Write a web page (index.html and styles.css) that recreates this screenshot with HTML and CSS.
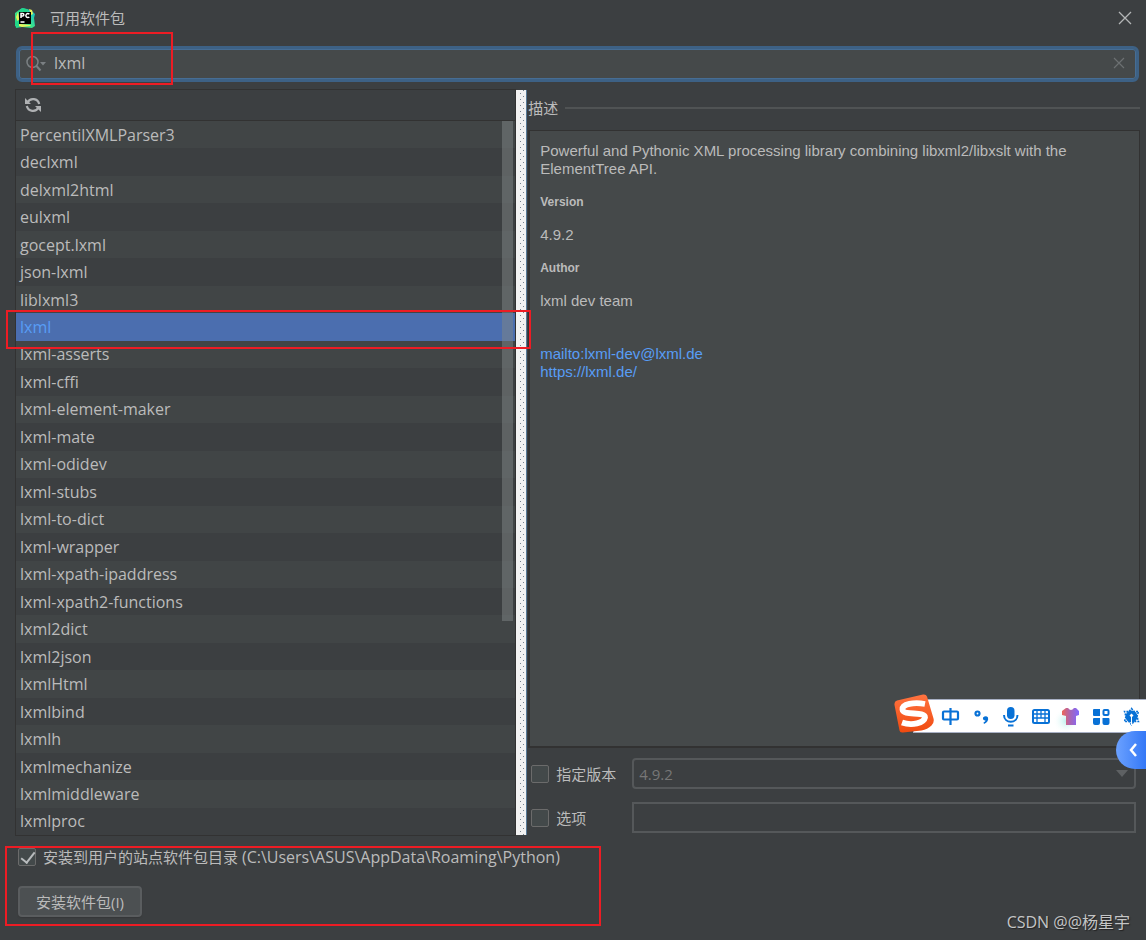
FILE: index.html
```
<!DOCTYPE html>
<html lang="zh-CN">
<head>
<meta charset="utf-8">
<title>可用软件包</title>
<link rel="stylesheet" href="styles.css">
</head>
<body>
<div class="dialog">
  <header class="titlebar">
    <svg class="app-icon" viewBox="0 0 20 20" aria-hidden="true">
      <defs><linearGradient id="pc" x1="0" y1="1" x2="1" y2="0"><stop offset="0" stop-color="#21d789"/><stop offset=".45" stop-color="#3be28a"/><stop offset="1" stop-color="#0fb5d6"/></linearGradient></defs>
      <path fill="url(#pc)" d="M0 5 7 0l5 1 5 2 3 3-1 4 1 8-3 2-10-1-6 1-1-6z"/>
      <path fill="#e9f25a" d="m1 9 2-5 2 12 10 1 1 1-9 1-3-1zM14 1l3 1 1 4-2 1z"/>
      <path fill="#21d789" d="m0 14 4-2v7l-4-1zM3 3l5-3 6 2-2 2H4z"/>
      <path d="M4 4h12v12H4z"/>
      <path fill="none" stroke="#fff" stroke-width="1.500" d="M6 10V5.500h1.600a1.200 1.200 0 0 1 0 2.500H6M14.300 6.200a2 2 0 1 0 0 2.800M5.500 14h4"/>
    </svg>
    <h1 class="title">可用软件包</h1>
    <button class="icon-button close" aria-label="关闭"><svg width="14" height="14" viewBox="0 0 14 14"><path d="m1 1 12 12M13 1 1 13" fill="none" stroke="#b4b6b7" stroke-width="1.300"/></svg></button>
  </header>

  <div class="search">
    <svg width="22" height="18" viewBox="0 0 22 18" aria-hidden="true"><circle cx="6.500" cy="8" r="5.500" fill="none" stroke="#7b8083" stroke-width="1.500"/><path d="m10.500 12 4 4.500" stroke="#7b8083" stroke-width="2"/><path d="M14 8h6l-3 3.500z" fill="#7b8083"/></svg>
    <input class="search-input" type="text" value="lxml" aria-label="搜索">
    <button class="icon-button" aria-label="清除"><svg width="12" height="12" viewBox="0 0 12 12"><path d="m1 1 10 10M11 1 1 11" fill="none" stroke="#6c7072" stroke-width="1.200"/></svg></button>
    <span class="mark mark-search"></span>
  </div>

  <main class="columns">
    <section class="packages">
      <div class="toolbar">
        <button class="icon-button" aria-label="刷新"><svg width="18" height="18" viewBox="0 0 18 18"><g fill="none" stroke="#afb1b3" stroke-width="2.200"><path d="M3.500 6.500A6.300 6.300 0 0 1 15.200 8"/><path d="M14.500 11.500A6.300 6.300 0 0 1 2.800 10"/></g><path fill="#afb1b3" d="M1 2v6h6zM17 16v-6h-6z"/></svg></button>
      </div>
      <ul class="list">
        <li>PercentilXMLParser3</li><li>declxml</li><li>delxml2html</li><li>eulxml</li><li>gocept.lxml</li><li>json-lxml</li><li>liblxml3</li>
        <li class="selected">lxml<span class="mark mark-row"></span></li>
        <li>lxml-asserts</li><li>lxml-cffi</li><li>lxml-element-maker</li><li>lxml-mate</li><li>lxml-odidev</li><li>lxml-stubs</li><li>lxml-to-dict</li><li>lxml-wrapper</li><li>lxml-xpath-ipaddress</li><li>lxml-xpath2-functions</li><li>lxml2dict</li><li>lxml2json</li><li>lxmlHtml</li><li>lxmlbind</li><li>lxmlh</li><li>lxmlmechanize</li><li>lxmlmiddleware</li><li>lxmlproc</li>
      </ul>
      <span class="scroll-thumb"></span>
    </section>
    <div class="splitter"></div>
    <section class="details">
      <h2 class="group-title">描述</h2>
      <article class="description">
        <p>Powerful and Pythonic XML processing library combining libxml2/libxslt with the ElementTree API.</p>
        <h3>Version</h3>
        <p>4.9.2</p>
        <h3>Author</h3>
        <p>lxml dev team</p>
        <p class="links"><a href="mailto:lxml-dev@lxml.de">mailto:lxml-dev@lxml.de</a><br><a href="https://lxml.de/">https://lxml.de/</a></p>
      </article>
      <div class="options">
        <label class="check"><input type="checkbox">指定版本</label>
        <div class="select-wrap">
          <select class="field version" aria-label="版本"><option>4.9.2</option></select>
          <svg class="arrow" width="12" height="7" viewBox="0 0 12 7" aria-hidden="true"><path d="M0 0h12L6 7z" fill="#5e6163"/></svg>
        </div>
        <label class="check"><input type="checkbox">选项</label>
        <input class="field" type="text" aria-label="选项">
      </div>
    </section>
  </main>

  <footer class="footer">
    <label class="check"><input type="checkbox" checked><span>安装到用户的站点软件包目录 <span class="path">(C:\Users\ASUS\AppData\Roaming\Python)</span></span></label>
    <button class="install">安装软件包(I)</button>
    <span class="mark mark-footer"></span>
  </footer>

  <div class="ime">
    <svg class="ime-logo" viewBox="0 0 40 40" aria-hidden="true"><defs><linearGradient id="sg" x1="0" y1="0" x2="0" y2="1"><stop offset="0" stop-color="#ff7340"/><stop offset="1" stop-color="#f04a10"/></linearGradient></defs><path fill="url(#sg)" d="M3 6.500 29 .500q3-.5 4 2l6.500 22q1 4-2 7-4 4-10 5L9 38.500q-3 .5-3.500-2L.5 11Q0 7.500 3 6.500z"/><path d="M31 10C20 8 8 10 8.500 15.500 9 22 31 17 31 23.500 30 29 18 32 8 28.500" fill="none" stroke="#fff" stroke-width="5.800"/></svg>
    <svg class="ime-icons" viewBox="0 0 206 32" aria-hidden="true">
      <defs><linearGradient id="ts" x1="0" y1="0" x2="1" y2="0"><stop offset="0" stop-color="#ed6557"/><stop offset=".5" stop-color="#a665b8"/><stop offset="1" stop-color="#8069ff"/></linearGradient><radialGradient id="gl"><stop offset="0" stop-color="#bdf1ee"/><stop offset="1" stop-color="#fff" stop-opacity="0"/></radialGradient></defs>
      <g fill="none" stroke="#0871d6" stroke-width="2.200"><rect x="3" y="11.500" width="15" height="8" rx="1"/><path d="M10.500 8v17"/><circle cx="37.500" cy="13.500" r="2"/></g>
      <path fill="#0871d6" d="M43 17.500q3-2.500 5 0 1 4-4 6.500l-.5-1.500q2-1 2-2-3 0-2.500-3z"/>
      <rect x="67" y="7" width="7.500" height="12" rx="3.700" fill="#0871d6"/><path d="M64 15c0 9 13.500 9 13.500 0M68 25.500h5.500" fill="none" stroke="#0871d6" stroke-width="2"/>
      <rect x="93" y="10" width="16" height="13" rx="1.500" fill="#fff" stroke="#0871d6" stroke-width="2"/><path d="M93 14h16M93 18h16M97 10v8M101 10v8M105 10v8M97 18v5M105 18v5" stroke="#0871d6" stroke-width="1.300"/>
      <circle cx="126" cy="21" r="13" fill="url(#gl)"/><path fill="url(#ts)" d="M126 8h2q3 4 6 0h2l3 3v4l-3 1v9h-10v-9l-4-1v-4z"/>
      <g fill="#0871d6"><path d="M154 9h6v7h-6a1 1 0 0 1-1-1v-5a1 1 0 0 1 1-1zM153 19a1 1 0 0 1 1-1h6v5a2 2 0 0 1-2 2h-3a2 2 0 0 1-2-2zM162.500 18h6a1 1 0 0 1 1 1v4a2 2 0 0 1-2 2h-3a2 2 0 0 1-2-2z"/><rect x="163.500" y="10" width="5" height="5" rx="1" fill="none" stroke="#0871d6" stroke-width="2"/></g>
      <path d="m191.500 8.500 2.500 3 4.500 0-1.500 5 1.500 5-4.500 0-2.500 3-2.500-3-4.500 0 1.500-5-1.500-5 4.500 0z" fill="none" stroke="#0871d6" stroke-width="1.500" stroke-dasharray="2 1"/><circle cx="191.500" cy="16.500" r="6" fill="#0871d6"/><path d="M191 25v-8l-1.500-1.500 2-2 2 2-1.500 1.500v8z" fill="#fff"/>
    </svg>
    <button class="side-tab" aria-label="展开"><svg width="10" height="16" viewBox="0 0 10 16"><path d="M8 2 3 8l5 6" fill="none" stroke="#fff" stroke-width="2.500"/></svg></button>
  </div>
  <div class="watermark">CSDN @@杨星宇</div>
</div>
</body>
</html>
```
FILE: styles.css
```
* { box-sizing: border-box; }
body {
  margin: 0;
  background: #3c3f41;
  color: #bbbbbb;
  font: 15px/20px "Open Sans", "Noto Sans CJK SC", sans-serif;
}
h1, h2, h3, p, ul { margin: 0; padding: 0; font-weight: 400; }
button, input, select { font: inherit; color: inherit; }
svg { display: block; }
.dialog {
  position: relative;
  display: flex;
  flex-direction: column;
  min-height: 100vh;
  padding: 0 6px 0 15px;
  overflow: hidden;
}
.icon-button {
  display: flex;
  padding: 0;
  border: 0;
  background: none;
}
.titlebar {
  display: flex;
  align-items: center;
  height: 36px;
  padding-right: 8px;
}
.app-icon { width: 20px; height: 20px; }
.title { flex: 1; margin-left: 15px; font-size: 15px; }
.search {
  position: relative;
  display: flex;
  align-items: center;
  height: 36px;
  margin: 10px 1px 7px;
  padding: 0 11px 2px 7px;
  border: 3px solid #3d6185;
  border-radius: 6px;
  background: #45494a;
  box-shadow: inset 0 0 0 1px #466d94;
}
.search-input {
  flex: 1;
  min-width: 0;
  margin-left: 6px;
  padding: 0;
  border: 0;
  outline: 0;
  background: none;
  font-size: 16px;
}
.mark { position: absolute; border: 2px solid #ed1c24; pointer-events: none; z-index: 2; }
.mark-search { left: 12px; top: -17px; width: 142px; height: 53px; }
.mark-row { left: -10px; right: -16px; top: -3px; bottom: -8px; }
.mark-footer { left: -10px; top: 10px; width: 596px; height: 80px; }
.columns { display: flex; flex: 1; }
.packages {
  position: relative;
  display: flex;
  flex-direction: column;
  flex: 501 1 0;
  border: 1px solid #323232;
}
.toolbar {
  display: flex;
  align-items: center;
  height: 31px;
  padding-left: 8px;
  border-bottom: 1px solid #323232;
}
.list { display: flex; flex-direction: column; flex: 1; list-style: none; font-size: 16px; }
.list li {
  position: relative;
  display: flex;
  flex: 1;
  align-items: center;
  padding-left: 4px;
  background: #414546;
}
.list li:nth-child(even) { background: #3c3f41; }
.list li.selected { background: #4b6eaf; color: #589df6; }
.scroll-thumb {
  position: absolute;
  top: 31px;
  right: 2px;
  width: 11px;
  height: 500px;
  background: rgba(128, 134, 134, .5);
}
.splitter {
  width: 11px;
  margin: 1px 0;
  border-right: 1px solid #577996;
  background:
    linear-gradient(#75828f 1px, transparent 1px) 4px 3px / 1px 6px repeat-y,
    linear-gradient(#75828f 1px, transparent 1px) 7px 0 / 1px 6px repeat-y,
    #f2f2f2;
}
.details {
  display: flex;
  flex-direction: column;
  flex: 614 1 0;
  min-width: 0;
  padding-left: 1px;
}
.group-title {
  display: flex;
  align-items: center;
  gap: 7px;
  height: 41px;
  padding-bottom: 4px;
  font-size: 15px;
}
.group-title::after { content: ""; flex: 1; height: 2px; background: #505354; }
.description {
  flex: 1;
  padding: 11px 40px 12px 10px;
  border: 1px solid #323232;
  border-left-width: 2px;
  border-bottom-width: 2px;
  background: #45494a;
  font: 15px/18px "Liberation Sans", Arial, sans-serif;
}
.description h3 { margin: 15px 0; font-size: 12px; font-weight: 700; }
.description .links { margin-top: 35px; }
a { color: #589df6; text-decoration: none; }
.options {
  display: grid;
  grid-template-columns: 101px 1fr;
  gap: 13px 0;
  align-items: center;
  padding: 10px 4px 3px 3px;
}
.check { display: flex; align-items: center; gap: 7px; }
.path { font-size: 16px; }
.check input {
  appearance: none;
  position: relative;
  width: 18px;
  height: 18px;
  margin: 0;
  border: 1px solid #6b6b6b;
  border-radius: 2px;
  background: #43494a;
}
.check input:checked::after {
  content: "";
  position: absolute;
  left: 5px;
  top: 0;
  width: 6px;
  height: 12px;
  border: solid #b8bbbd;
  border-width: 0 2px 2px 0;
  rotate: 38deg;
}
.field {
  display: block;
  width: 100%;
  height: 31px;
  padding: 0 7px;
  border: 2px solid #55585a;
  border-radius: 0;
  outline: 0;
  background: #3c3f41;
}
.select-wrap { position: relative; }
.version { appearance: none; padding: 0 5px; border-radius: 4px; color: #777777; }
.arrow { position: absolute; right: 8px; top: 12px; }
.footer {
  position: relative;
  display: flex;
  flex-direction: column;
  align-items: flex-start;
  gap: 19px;
  padding: 11px 3px 23px;
}
.install {
  height: 31px;
  padding: 0 16px;
  border: 2px solid #5a5d5f;
  border-radius: 4px;
  background: #4c5052;
  box-shadow: 0 1px 1px #353739;
  line-height: 26px;
}
.ime {
  position: absolute;
  right: 0;
  top: 700px;
  width: 232px;
  height: 32px;
  background: #ffffff;
  box-shadow: 0 0 0 1px #a8b0c4;
}
.ime-logo { position: absolute; left: -20px; top: -6px; width: 40px; height: 40px; }
.ime-icons { position: absolute; right: 0; top: 0; width: 206px; height: 32px; }
.side-tab {
  position: absolute;
  right: 0;
  top: 31px;
  display: flex;
  align-items: center;
  width: 30px;
  height: 38px;
  padding: 0 0 0 12px;
  border: 0;
  border-radius: 19px 0 0 19px;
  background: linear-gradient(90deg, #6ba1ff, #3478f6);
}
.watermark {
  position: absolute;
  right: 16px;
  bottom: 8px;
  font-size: 16px;
  color: #c4c5c6;
  text-shadow: 1px 1px 1px #222;
}
```
